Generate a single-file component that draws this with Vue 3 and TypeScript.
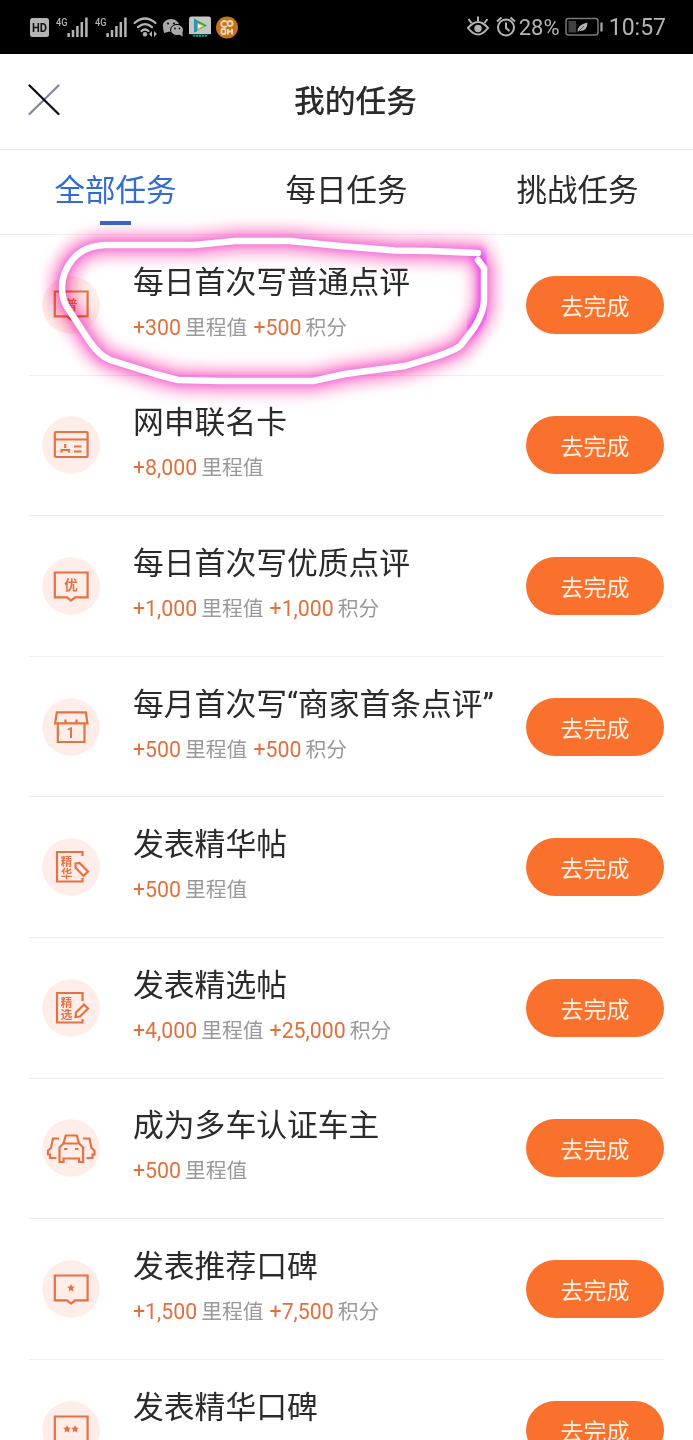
<script setup lang="ts">
interface Reward {
  amount: string
  unit: string
}
interface Task {
  icon: string
  title: string
  rewards: Reward[]
}

const tabs: string[] = ['全部任务', '每日任务', '挑战任务']
const activeTab = 0

const miles = (amount: string): Reward => ({ amount, unit: '里程值' })
const points = (amount: string): Reward => ({ amount, unit: '积分' })

const tasks: Task[] = [
  { icon: 'normal', title: '每日首次写普通点评', rewards: [miles('+300'), points('+500')] },
  { icon: 'card', title: '网申联名卡', rewards: [miles('+8,000')] },
  { icon: 'quality', title: '每日首次写优质点评', rewards: [miles('+1,000'), points('+1,000')] },
  { icon: 'shop', title: '每月首次写“商家首条点评”', rewards: [miles('+500'), points('+500')] },
  { icon: 'essence', title: '发表精华帖', rewards: [miles('+500')] },
  { icon: 'selected', title: '发表精选帖', rewards: [miles('+4,000'), points('+25,000')] },
  { icon: 'cars', title: '成为多车认证车主', rewards: [miles('+500')] },
  { icon: 'star', title: '发表推荐口碑', rewards: [miles('+1,500'), points('+7,500')] },
  { icon: 'stars', title: '发表精华口碑', rewards: [miles('+3,000'), points('+15,000')] },
]

const bubbleIcons = ['normal', 'quality', 'star', 'stars']
</script>

<template>
  <div class="screen">
    <header class="status">
      <svg class="status-left" width="220" height="54" viewBox="0 0 220 54">
        <rect x="10" y="18" width="19" height="19" rx="2.5" fill="#b4b4b4" />
        <text x="19.5" y="32" class="hd" text-anchor="middle" textLength="15" lengthAdjust="spacingAndGlyphs">HD</text>
        <g v-for="x in [0, 39]" :key="x" :transform="`translate(${x} 0)`">
          <text x="36" y="26" class="net" textLength="11.5" lengthAdjust="spacingAndGlyphs">4G</text>
          <path d="M48.6 33v4M53 30v7M57.4 26v11M61.8 22v15M66.4 17.5v19.5" stroke="#b4b4b4" stroke-width="2.5" />
        </g>
        <g fill="none" stroke="#b4b4b4" stroke-width="2.2" stroke-linecap="round">
          <path d="M114.500 23q10.500 -9 21 0M118 27.200q7 -6 14 0M121.500 31q3.500 -3 7 0" />
        </g>
        <circle cx="125" cy="34.300" r="2.200" fill="#b4b4b4" />
        <path d="M132 31v6l-3 -3zM134 31v6l3 -3z" fill="#b4b4b4" />
        <g fill="#a9a9a9">
          <path d="M144 33l-1 -5h8l-3 4z" />
          <ellipse cx="151" cy="25.500" rx="8.200" ry="6.500" />
          <ellipse cx="157" cy="30" rx="6.500" ry="5.600" stroke="#000" stroke-width="1" />
          <path d="M159 34l3.500 3v-5z" />
        </g>
        <g fill="#111">
          <circle cx="148" cy="23.500" r="1.100" /><circle cx="154" cy="23.500" r="1.100" />
          <circle cx="155" cy="28.500" r=".9" /><circle cx="159.500" cy="28.500" r=".9" />
        </g>
        <path d="M169 19q0 -2.500 2.500 -2.500h17q2.500 0 2.500 2.500v15h-22z" fill="#c6c8c8" />
        <path d="M174 18.500l13 7 -13 7z" fill="#37a53c" />
        <path d="M174 18.500l3 2v11l-3 1z" fill="#2f93bb" />
        <path d="M177.500 23l7 3 -7 4z" fill="#e6d26a" />
        <path d="M178 24.500l3.500 1.500 -3.500 2z" fill="#fff" />
        <path d="M169 34h22q-11 7 -22 0z" fill="#073e3b" />
        <path d="M173 35.700h14" stroke="#2aa79a" stroke-width="1.500" stroke-dasharray="2 1" />
        <circle cx="207" cy="27.500" r="11" fill="#c67617" />
        <g fill="none" stroke="#e8d5bd" stroke-width="1.900">
          <path d="M206.500 22a3 3 0 1 0 0 4" />
          <circle cx="210" cy="23.500" r="2.500" />
          <rect x="201.500" y="29" width="4" height="5" rx="1" />
          <path d="M208 29v5.500M208 31.500h5M212 29v5.500" />
        </g>
      </svg>
      <div class="status-right">
        <svg width="50" height="30" viewBox="0 0 50 30" fill="none" stroke="#b4b4b4" stroke-width="2">
          <path d="M1 16q10 -12 20 0q-10 13 -20 0z" />
          <circle cx="11" cy="16.500" r="3.700" fill="#b4b4b4" stroke="none" />
          <path d="M11 9v-4.500M4.500 11l-3 -4M17.500 11l3 -4" />
          <circle cx="39" cy="15.500" r="8" />
          <path d="M39 10.500v5.500l3.500 3M30 9.500l4.500 -4M48 9.500l-4.500 -4" />
        </svg>
        <span class="pct">28%</span>
        <svg width="38" height="20" viewBox="0 0 38 20">
          <rect x="1" y="1.500" width="32" height="16.500" rx="2.500" fill="none" stroke="#777" stroke-width="1.500" />
          <rect x="3.500" y="4" width="7.500" height="11.500" fill="#414141" />
          <path d="M12.500 15.500q-.5 -8 10 -10q0 9 -8.500 8.500z" fill="#b4b4b4" />
          <path d="M13 15l6 -6" stroke="#333" stroke-width=".8" />
          <path d="M36.500 5.500v9" stroke="#aaa" stroke-width="2.200" />
        </svg>
        <span class="clock">10:57</span>
      </div>
    </header>

    <div class="titlebar">
      <svg class="close" width="32" height="32" viewBox="0 0 32 32" fill="none" stroke-width="2.300" stroke-linecap="round">
        <path d="M30.500 1.500l-29 28.500" stroke="#8288a0" />
        <path d="M1.500 1.500l29 28.500" stroke="#080d20" />
      </svg>
      <h1>我的任务</h1>
    </div>

    <nav class="tabs">
      <div v-for="(tab, i) in tabs" :key="tab" class="tab" :class="{ active: i === activeTab }">{{ tab }}</div>
    </nav>

    <main class="list">
      <section v-for="task in tasks" :key="task.title" class="row">
        <svg class="icon" width="58" height="58" viewBox="0 0 58 58">
          <circle cx="29" cy="29" r="28.800" fill="#feede8" />
          <g fill="none" stroke="#e37342" stroke-width="2.200">
            <path v-if="bubbleIcons.includes(task.icon)" d="M12.800 15.500h32.800v24.800h-12.600l-4 3.200 -4 -3.200h-12.200z" />
            <template v-if="task.icon === 'card'">
              <rect x="12.800" y="16" width="32.800" height="25" rx="1" />
              <path d="M13 23.500h32.500M32 30.500h7.500M32 35.500h7.500" />
              <path d="M19.500 36.500v-2.500h7.500v2.500M23.200 28v4" />
            </template>
            <template v-if="task.icon === 'shop'">
              <path d="M14.800 14.300h29l1.700 11h-32.400zM15.800 25v19h26.700v-19M23.500 21.500v3M34.500 21.500v3" />
            </template>
            <template v-if="task.icon === 'essence'">
              <path d="M40.500 18v-4h-25.500v29.500h25.500v-3.500" />
              <path d="M33.500 25.500l4 -.5 8.500 8.500 -4.500 4.500 -8 -8.500z" />
            </template>
            <template v-if="task.icon === 'selected'">
              <path d="M40.500 22v-8h-25.500v29.500h25.500v-3.500" />
              <path d="M33.500 38l.5 -4.500 8 -8 4 4 -8 8z" />
            </template>
            <template v-if="task.icon === 'cars'">
              <path d="M17.500 43v-14.500l4 -4 2.300 -8h11l2.300 8 4 4v14.500h-4v-3.500h-15.600v3.500zM20 24.500h18.500" />
              <path d="M17 19.500h-6l-2 9.500 -3 2.500v4h2v3.500h6.500M41 19.500h6.500l2 9.500 3 2.500v4h-2v3.500h-6" />
              <path d="M22 30h3.500M33 30h3.500" />
            </template>
          </g>
          <g class="glyph" text-anchor="middle">
            <text v-if="task.icon === 'normal'" x="29" y="33" font-size="13">普</text>
            <text v-if="task.icon === 'quality'" x="29" y="33" font-size="13.500">优</text>
            <text v-if="task.icon === 'shop'" x="28.500" y="40" font-size="14">1</text>
            <text v-if="task.icon === 'essence' || task.icon === 'selected'" x="24.500" y="27.500" font-size="11.500">精</text>
            <text v-if="task.icon === 'essence'" x="24.500" y="39.500" font-size="11.500">华</text>
            <text v-if="task.icon === 'selected'" x="24.500" y="39.500" font-size="11.500">选</text>
          </g>
          <g fill="#e37342">
            <path v-if="task.icon === 'star'" d="M29 24l1.200 2.400 2.600 .4 -1.900 1.900 .5 2.700 -2.400 -1.300 -2.400 1.300 .5 -2.700 -1.900 -1.900 2.600 -.4z" />
            <path v-for="x in task.icon === 'stars' ? [-4, 4] : []" :key="x" :transform="`translate(${x} 0)`" d="M29 24l1.200 2.400 2.600 .4 -1.900 1.900 .5 2.700 -2.400 -1.300 -2.400 1.300 .5 -2.700 -1.900 -1.900 2.600 -.4z" />
          </g>
        </svg>
        <div class="info">
          <h2>{{ task.title }}</h2>
          <p>
            <span v-for="r in task.rewards" :key="r.unit" class="reward"><b>{{ r.amount }}</b><span>{{ r.unit }}</span></span>
          </p>
        </div>
        <button type="button">去完成</button>
      </section>
    </main>

    <svg class="marker" width="693" height="440" viewBox="0 0 693 440" fill="none" stroke-linecap="round" stroke-linejoin="round">
      <defs>
        <filter id="wide" x="-20%" y="-30%" width="140%" height="160%"><feGaussianBlur stdDeviation="7" /></filter>
        <filter id="tight" x="-20%" y="-30%" width="140%" height="160%"><feGaussianBlur stdDeviation="3.500" /></filter>
        <path id="loop" d="M478 253L430 251L395 250.500L340 246L290 241L235 241L194 245H105Q84 246 73 259Q62 272 62 288Q62 301 69 310L90 342Q100 356 110 360L155 374L178 380L220 381H313L345 374L405 366L435 357Q456 350 461 345L474 328Q484 312 484 300V268L478 260" />
      </defs>
      <use href="#loop" stroke="#ff84c8" stroke-width="25" filter="url(#wide)" opacity=".78" />
      <use href="#loop" stroke="#e65ce0" stroke-width="10" filter="url(#tight)" opacity=".7" />
      <path d="M478 255L484 268V300Q482 316 470 332" stroke="#e12cff" stroke-width="11" filter="url(#tight)" opacity=".65" />
    </svg>
    <svg class="marker line" width="693" height="440" viewBox="0 0 693 440" fill="none" stroke="#fff" stroke-width="6.500" stroke-linecap="round" stroke-linejoin="round">
      <use href="#loop" />
    </svg>
  </div>
</template>

<style>
body {
  margin: 0;
  background: #fff;
}
</style>

<style scoped>
.screen {
  position: relative;
  width: 693px;
  height: 1440px;
  overflow: hidden;
  background: #fff;
  color: #2b2b2b;
  font-family: Roboto, 'Noto Sans CJK SC', sans-serif;
}
.status {
  height: 54px;
  background: #000;
  display: flex;
  justify-content: space-between;
  padding: 0 27px 0 20px;
}
.hd {
  font: bold 12.5px Roboto, sans-serif;
  fill: #111;
}
.net {
  font: 500 11px Roboto, sans-serif;
  fill: #b4b4b4;
}
.status-right {
  display: flex;
  align-items: center;
  color: #b4b4b4;
  font-size: 23px;
}
.status-right svg {
  flex: none;
}
.pct {
  width: 41px;
  margin-left: 2px;
  margin-right: 5px;
  font-size: 22px;
}
.clock {
  margin-left: 6px;
}
.titlebar {
  height: 95px;
  border-bottom: 1.5px solid #e9e9ea;
  display: grid;
  grid-template-columns: 1fr auto 1fr;
  align-items: center;
  padding: 0 28px 0 28px;
}
.close {
  margin-bottom: 4px;
}
h1 {
  grid-column: 2;
  margin: 0 0 0 18px;
  font-size: 30.8px;
  line-height: 44px;
  font-weight: 500;
}
.titlebar h1 {
  margin-left: 18px;
}
.tabs {
  height: 84px;
  border-bottom: 1.5px solid #f0f0f1;
  display: flex;
}
.tab {
  flex: 1;
  display: flex;
  flex-direction: column;
  align-items: center;
  padding-top: 19px;
  font-size: 30.5px;
  line-height: 44px;
}
.tab.active {
  color: #326cd2;
}
.tab.active::after {
  content: '';
  width: 31px;
  height: 4px;
  margin-top: 8px;
  background: #3767c9;
}
.list {
  padding: 0 29px;
}
.row {
  height: 140.600px;
  box-sizing: border-box;
  border-bottom: 1.5px solid #efefef;
  display: flex;
  align-items: center;
}
.icon {
  flex: none;
  margin-left: 13px;
  margin-right: 33px;
}
.glyph {
  fill: #e37342;
  font-family: Roboto, 'Noto Sans CJK SC', sans-serif;
  font-weight: 700;
}
.info {
  flex: 1;
  min-width: 0;
  white-space: nowrap;
}
h2 {
  margin: 0;
  font-size: 30.800px;
  line-height: 46px;
  font-weight: 400;
}
p {
  margin: 0;
  display: flex;
  gap: 6px;
  font-size: 20.800px;
  line-height: 44px;
  color: #999;
}
.reward {
  display: flex;
  gap: 4px;
}
b {
  color: #e0713d;
  font-weight: 400;
  font-size: 21.300px;
}
button {
  flex: none;
  width: 138px;
  height: 58px;
  padding: 0;
  border: 0;
  border-radius: 29px;
  background: #fa702d;
  color: #fff0df;
  font-family: 'Noto Sans CJK SC', sans-serif;
  font-size: 23px;
  line-height: 58px;
}
.marker {
  position: absolute;
  left: 0;
  top: 0;
  mix-blend-mode: multiply;
  pointer-events: none;
}
.marker.line {
  mix-blend-mode: normal;
}
</style>
